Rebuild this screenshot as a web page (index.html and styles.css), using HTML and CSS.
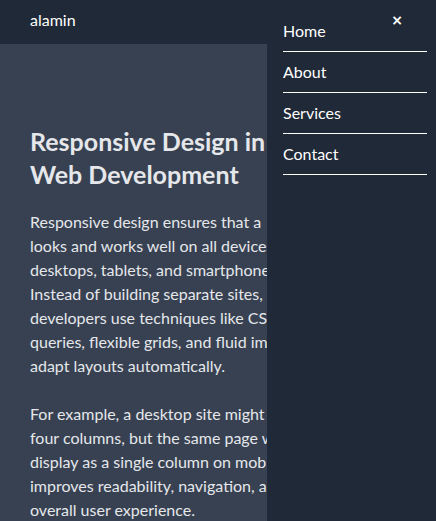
FILE: index.html
```html
<!DOCTYPE html>
<html lang="en">
<head>
<meta charset="utf-8">
<title>alamin</title>
<link rel="stylesheet" href="styles.css">
</head>
<body>
<header class="topbar">
  <span class="brand">alamin</span>
</header>
<main class="content">
  <h1 class="title">Responsive Design in<br>Web Development</h1>
  <p class="text">Responsive design ensures that a<br>looks and works well on all devices,<br>desktops, tablets, and smartphones.<br>Instead of building separate sites,<br>developers use techniques like CSS media<br>queries, flexible grids, and fluid images to<br>adapt layouts automatically.</p>
  <p class="text">For example, a desktop site might show<br>four columns, but the same page will<br>display as a single column on mobile. This<br>improves readability, navigation, and the<br>overall user experience.</p>
</main>
<nav class="drawer">
  <button class="close" type="button">&times;</button>
  <ul class="menu">
    <li class="menu-item"><a href="#">Home</a></li>
    <li class="menu-item"><a href="#">About</a></li>
    <li class="menu-item"><a href="#">Services</a></li>
    <li class="menu-item"><a href="#">Contact</a></li>
  </ul>
</nav>
</body>
</html>
```
FILE: styles.css
```css
* { box-sizing: border-box; }
html, body { height: 100%; }
body {
  margin: 0;
  background: #374151;
  color: #e5e7eb;
  font-family: "Lato", "Open Sans", sans-serif;
  font-size: 16px;
  line-height: 24px;
  overflow: hidden;
}
.topbar {
  height: 44px;
  background: #1f2937;
  padding: 8px 30px;
  display: flex;
  align-items: center;
}
.brand {
  color: #ffffff;
  font-size: 16px;
  margin-top: -4px;
}
.content {
  padding: 81px 0 0 30px;
  margin-right: 169px;
  white-space: nowrap;
  overflow: hidden;
}
.title {
  margin: 0 0 19px;
  font-size: 25px;
  line-height: 33px;
  font-weight: 700;
  color: #e5e7eb;
}
.text {
  margin: 0 0 24px;
}
.drawer {
  position: fixed;
  top: 0;
  right: 0;
  bottom: 0;
  width: 169px;
  background: #1f2937;
  padding: 11px 9px 0 16px;
}
.close {
  position: absolute;
  top: 8px;
  right: 33px;
  background: none;
  border: 0;
  padding: 0;
  color: #ffffff;
  font-size: 14px;
  font-weight: 700;
  line-height: 24px;
  font-family: "DejaVu Sans", sans-serif;
  cursor: pointer;
}
.menu {
  list-style: none;
  margin: 0;
  padding: 0;
}
.menu-item {
  padding: 8px 0;
  border-bottom: 1px solid #ffffff;
}
.menu-item a {
  color: #ffffff;
  text-decoration: none;
}
```
